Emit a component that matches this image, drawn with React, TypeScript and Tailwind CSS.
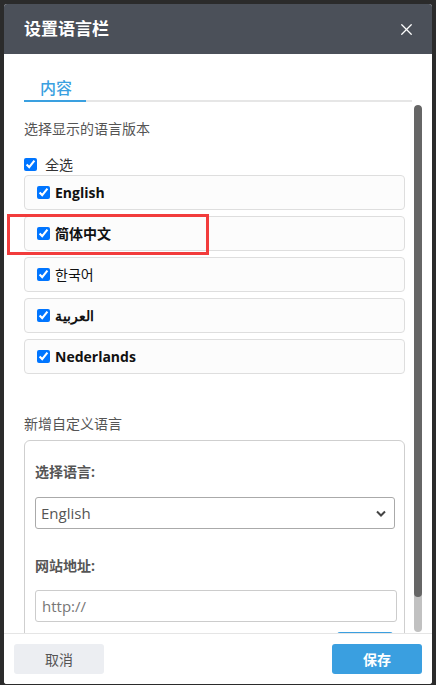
import { X } from 'lucide-react'

const languages = ['English', '简体中文', '한국어', 'العربية', 'Nederlands']

const font = { fontFamily: '"Open Sans", "Noto Sans CJK SC", "Noto Sans", sans-serif' }

const Check = () => (
  <input type="checkbox" checked readOnly className="m-0 h-[13px] w-[13px] shrink-0" />
)

export default function App() {
  return (
    <div className="relative h-[685px] w-[436px] overflow-hidden bg-[#2b2b2b] px-[4px] pt-[4px] pb-[1px]" style={font}>
      <div className="flex h-full flex-col overflow-hidden rounded-[3px] bg-white">
        {/* header */}
        <div className="flex h-[50px] shrink-0 items-center justify-between bg-[#4b5059] pl-[20px] pr-[16px]">
          <span className="text-[17px] font-bold text-white">设置语言栏</span>
          <X size={19} strokeWidth={1.6} className="text-white" />
        </div>

        {/* body */}
        <div className="relative flex-1 overflow-hidden pl-[20px] pr-[20px]">
          <div className="mt-[22px] flex border-b-2 border-[#e6e6e6]">
            <div className="-mb-[2px] w-[62px] border-b-2 border-[#3aa0e0] pl-[16px] text-[16px] font-medium leading-[24px] text-[#3aa0e0]">
              内容
            </div>
          </div>

          <p className="mt-[17px] text-[14px] leading-[20px] text-[#555]">选择显示的语言版本</p>

          <label className="mt-[15px] flex h-[20px] items-center gap-[8px] text-[14px] text-[#333]">
            <Check />
            全选
          </label>

          <div className="mt-[1px] flex flex-col gap-[6px]">
            {languages.map((lang) => (
              <div
                key={lang}
                className="flex h-[35px] w-[381px] items-center gap-[5px] rounded-[4px] border border-[#dedede] bg-[#fcfcfc] pl-[12px]"
              >
                <Check />
                <span className={`text-[14px] text-[#111] ${lang === '한국어' ? 'font-normal' : 'font-bold'}`}>{lang}</span>
              </div>
            ))}
          </div>

          <p className="mt-[40px] text-[14px] leading-[20px] text-[#555]">新增自定义语言</p>

          <div className="mt-[6px] w-[381px] rounded-[6px] border border-[#cfcfcf] px-[10px] pt-[21px]">
            <p className="text-[14px] font-bold leading-[20px] text-[#555]">选择语言:</p>
            <div className="mt-[15px] flex h-[32px] w-[360px] items-center justify-between rounded-[3px] border border-[#aaa] pl-[5px] pr-[8px] text-[15px] text-[#555]">
              English
              <svg width="10" height="7" viewBox="0 0 10 7">
                <path d="M1 1.5 5 5.5 9 1.5" fill="none" stroke="#444" strokeWidth="2" />
              </svg>
            </div>

            <p className="mt-[27px] text-[14px] font-bold leading-[20px] text-[#555]">网站地址:</p>
            <div className="mt-[14px] flex h-[32px] w-[362px] items-center rounded-[3px] border border-[#ccc] pl-[6px] text-[15px] text-[#777]">
              http://
            </div>
            <div className="ml-auto mt-[10px] mr-[1px] h-[30px] w-[56px] rounded-[3px] bg-[#3a9fe0]" />
          </div>

          {/* scrollbar */}
          <div className="absolute right-[10px] top-[51px] bottom-[1px] flex w-[8px] flex-col overflow-hidden rounded-full bg-[#c1c1c1]">
            <div className="h-[492px] rounded-full bg-[#666]" />
          </div>
        </div>

        {/* footer */}
        <div className="flex shrink-0 justify-between border-t border-[#e5e5e5] bg-white px-[10px] py-[10px]">
          <button className="h-[30px] w-[90px] rounded-[3px] bg-[#eceef2] text-[14px] text-[#555]">取消</button>
          <button className="h-[30px] w-[90px] rounded-[3px] bg-[#3a9fe0] text-[14px] font-bold text-white">保存</button>
        </div>
      </div>

      {/* highlight box */}
      <div className="absolute left-[7px] top-[214px] h-[41px] w-[202px] border-[3px] border-[#f23c3c]" />
    </div>
  )
}
